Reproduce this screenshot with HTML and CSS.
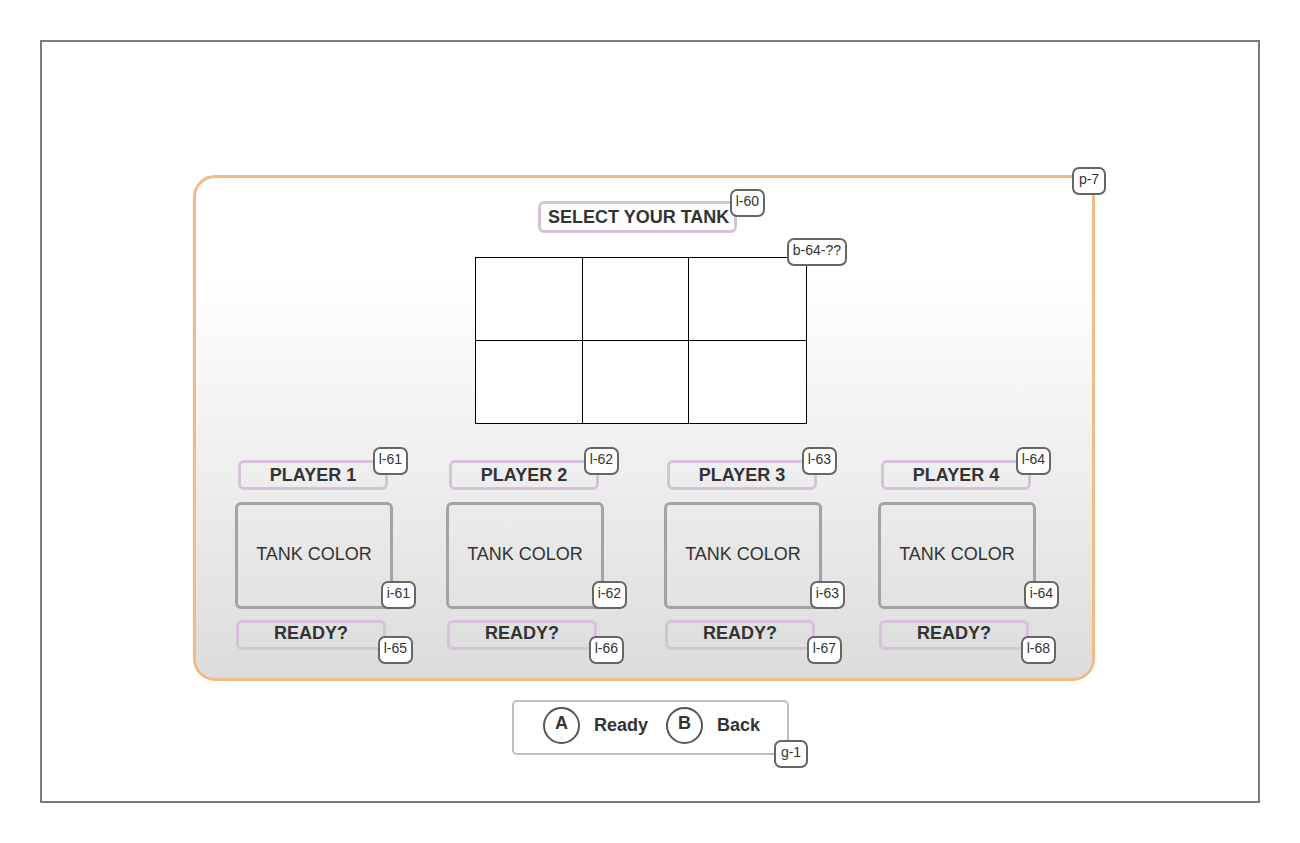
FILE: index.html
```html
<!DOCTYPE html>
<html lang="en">
<head>
    <meta charset="UTF-8">
    <title>Select Your Tank</title>
    <link rel="stylesheet" href="styles.css">
</head>
<body>
    <div class="frame">
        <div class="panel">
            <span class="badge badge-panel">p-7</span>

            <div class="title">
                SELECT YOUR TANK
                <span class="badge badge-title">l-60</span>
            </div>

            <div class="tank-grid">
                <div class="cell"></div>
                <div class="cell"></div>
                <div class="cell"></div>
                <div class="cell"></div>
                <div class="cell"></div>
                <div class="cell"></div>
                <span class="badge badge-grid">b-64-??</span>
            </div>

            <div class="players">
                <div class="player">
                    <div class="label">PLAYER 1<span class="badge badge-label">l-61</span></div>
                    <div class="tank-color">TANK COLOR<span class="badge badge-tank">i-61</span></div>
                    <div class="ready">READY?<span class="badge badge-ready">l-65</span></div>
                </div>
                <div class="player">
                    <div class="label">PLAYER 2<span class="badge badge-label">l-62</span></div>
                    <div class="tank-color">TANK COLOR<span class="badge badge-tank">i-62</span></div>
                    <div class="ready">READY?<span class="badge badge-ready">l-66</span></div>
                </div>
                <div class="player">
                    <div class="label">PLAYER 3<span class="badge badge-label">l-63</span></div>
                    <div class="tank-color">TANK COLOR<span class="badge badge-tank">i-63</span></div>
                    <div class="ready">READY?<span class="badge badge-ready">l-67</span></div>
                </div>
                <div class="player">
                    <div class="label">PLAYER 4<span class="badge badge-label">l-64</span></div>
                    <div class="tank-color">TANK COLOR<span class="badge badge-tank">i-64</span></div>
                    <div class="ready">READY?<span class="badge badge-ready">l-68</span></div>
                </div>
            </div>
        </div>

        <div class="controls">
            <span class="button-icon">A</span>
            <span class="control-text">Ready</span>
            <span class="button-icon">B</span>
            <span class="control-text">Back</span>
            <span class="badge badge-controls">g-1</span>
        </div>
    </div>
</body>
</html>
```

FILE: styles.css
```css
* {
    box-sizing: border-box;
    margin: 0;
    padding: 0;
    font-family: "Liberation Sans", Arial, sans-serif;
}

body {
    background-color: #fff;
    color: #333;
}

.frame {
    margin: 40px;
    width: 1220px;
    height: 763px;
    border: 2px solid #7a7a7a;
    padding: 133px 0 0 151px;
}

.panel {
    position: relative;
    width: 902px;
    height: 506px;
    border: 3px solid #f2bb86;
    border-radius: 22px;
    background: linear-gradient(to bottom, #fff 20%, #dcdcdc 100%);
    display: flex;
    flex-direction: column;
    align-items: flex-start;
}

/* little id tags on the corners */
.badge {
    position: absolute;
    background-color: #fff;
    border: 2px solid #666;
    border-radius: 7px;
    font-size: 14px;
    color: #333;
    height: 28px;
    min-width: 34px;
    padding: 0 4px 4px;
    display: flex;
    align-items: center;
    justify-content: center;
    white-space: nowrap;
    font-weight: normal;
}

.badge-panel { right: -14px; top: -11px; }
.badge-title { right: -31px; top: -15px; }
.badge-grid { right: -40px; top: -20px; }
.badge-label { right: -23px; top: -16px; }
.badge-tank { right: -26px; bottom: -3px; }
.badge-ready { right: -30px; bottom: -17px; }
.badge-controls { right: -21px; bottom: -15px; }

.title {
    position: relative;
    margin: 23px 0 0 342px;
    width: 199px;
    height: 32px;
    border: 3px solid #d6c2d9;
    border-radius: 6px;
    font-size: 18px;
    font-weight: bold;
    display: flex;
    align-items: center;
    padding-left: 7px;
}

.tank-grid {
    position: relative;
    margin: 24px 0 0 279px;
    width: 332px;
    height: 167px;
    border-top: 1px solid #000;
    border-left: 1px solid #000;
    background-color: #fff;
    display: grid;
    grid-template-columns: 107px 106px 118px;
    grid-template-rows: 83px 83px;
}

.cell {
    border-right: 1px solid #000;
    border-bottom: 1px solid #000;
}

.players {
    margin: 36px 0 0 39px;
    display: flex;
    gap: 53px;
}

.player:nth-child(3) { margin-left: 7px; }
.player:nth-child(4) { margin-left: 3px; }

.player {
    display: flex;
    flex-direction: column;
    align-items: flex-start;
}

.label,
.ready {
    position: relative;
    width: 150px;
    height: 30px;
    border: 3px solid #d6c2d9;
    border-radius: 6px;
    font-size: 18px;
    font-weight: bold;
    display: flex;
    align-items: center;
    justify-content: center;
}

.label {
    margin-left: 3px;
}

.tank-color {
    position: relative;
    margin-top: 12px;
    width: 158px;
    height: 107px;
    border: 3px solid #a3a3a3;
    border-radius: 6px;
    font-size: 18px;
    display: flex;
    align-items: center;
    justify-content: center;
    padding-bottom: 3px;
}

.ready {
    margin-top: 11px;
    margin-left: 1px;
    padding-bottom: 3px;
}

.controls {
    position: relative;
    margin: 19px 0 0 319px;
    width: 277px;
    height: 55px;
    border: 2px solid #bdbdbd;
    border-radius: 5px;
    display: flex;
    align-items: center;
    padding: 0 0 4px 29px;
}

.button-icon {
    width: 37px;
    height: 37px;
    border: 2px solid #555;
    border-radius: 50%;
    font-size: 18px;
    font-weight: bold;
    display: flex;
    align-items: center;
    justify-content: center;
    padding-bottom: 5px;
}

.control-text {
    font-size: 18px;
    font-weight: bold;
    margin: 0 18px 0 14px;
}
```
